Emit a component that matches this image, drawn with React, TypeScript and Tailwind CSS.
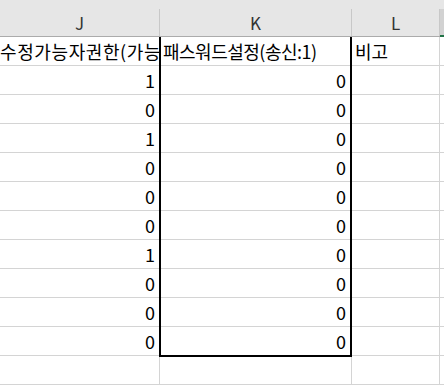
import React from "react";

const jVals = ["1", "0", "1", "0", "0", "0", "1", "0", "0", "0"];
const kVals = ["0", "0", "0", "0", "0", "0", "0", "0", "0", "0"];

const font = { fontFamily: '"Noto Sans CJK KR", "Noto Sans", sans-serif' };

function Row({ j, k, l, jRight, kRight, kTight }: { j: string; k: string; l: string; jRight?: boolean; kRight?: boolean; kTight?: boolean }) {
  return (
    <div className="flex h-[29px]">
      <div className={`w-[160px] shrink-0 border-r border-b border-[#d4d4d4] flex items-center overflow-hidden whitespace-nowrap ${jRight ? "justify-end pr-[4px]" : "pl-0 tracking-[0.6px]"}`}>
        {j}
      </div>
      <div className={`w-[192px] shrink-0 border-r border-b border-[#d4d4d4] flex items-center overflow-hidden whitespace-nowrap ${kRight ? "justify-end pr-[5px]" : "pl-[3px]"} ${kTight ? "tracking-[-0.5px]" : ""}`}>
        {k}
      </div>
      <div className="w-[88px] shrink-0 border-r border-b border-[#d4d4d4] flex items-center pl-[3px] whitespace-nowrap overflow-hidden">
        {l}
      </div>
      <div className="flex-1 border-b border-[#d4d4d4]" />
    </div>
  );
}

export default function App() {
  return (
    <div className="relative w-[444px] h-[389px] overflow-hidden bg-white text-[18px] text-black" style={font}>
      {/* column headers */}
      <div className="flex h-[37px] bg-[#e6e6e6] border-b border-[#ababab] text-[#333] text-[17px]">
        <div className="w-[160px] shrink-0 pt-[9px]">
          <div className="h-[27px] flex items-center justify-center border-r border-[#c8c8c8]">J</div>
        </div>
        <div className="w-[192px] shrink-0 pt-[9px]">
          <div className="h-[27px] flex items-center justify-center border-r border-[#c8c8c8]">K</div>
        </div>
        <div className="w-[88px] shrink-0 pt-[9px]">
          <div className="h-[27px] flex items-center justify-center border-r border-[#c8c8c8]">L</div>
        </div>
        <div className="flex-1 pt-[9px]">
          <div className="h-[27px] bg-[#d2d2d2]" />
        </div>
      </div>
      <div className="absolute right-0 top-[35px] w-[4px] h-[2px] bg-[#217346]" />

      {/* data rows */}
      <Row j="수정가능자권한(가능" k="패스워드설정(송신:1)" l="비고" kTight />
      {jVals.map((v, i) => (
        <Row key={i} j={v} k={kVals[i]} l="" jRight kRight />
      ))}
      <Row j="" k="" l="" />

      {/* thick outline around column K */}
      <div className="absolute left-[159px] top-[37px] w-[193px] h-[320px] border-x-2 border-b-2 border-black pointer-events-none" />
    </div>
  );
}
